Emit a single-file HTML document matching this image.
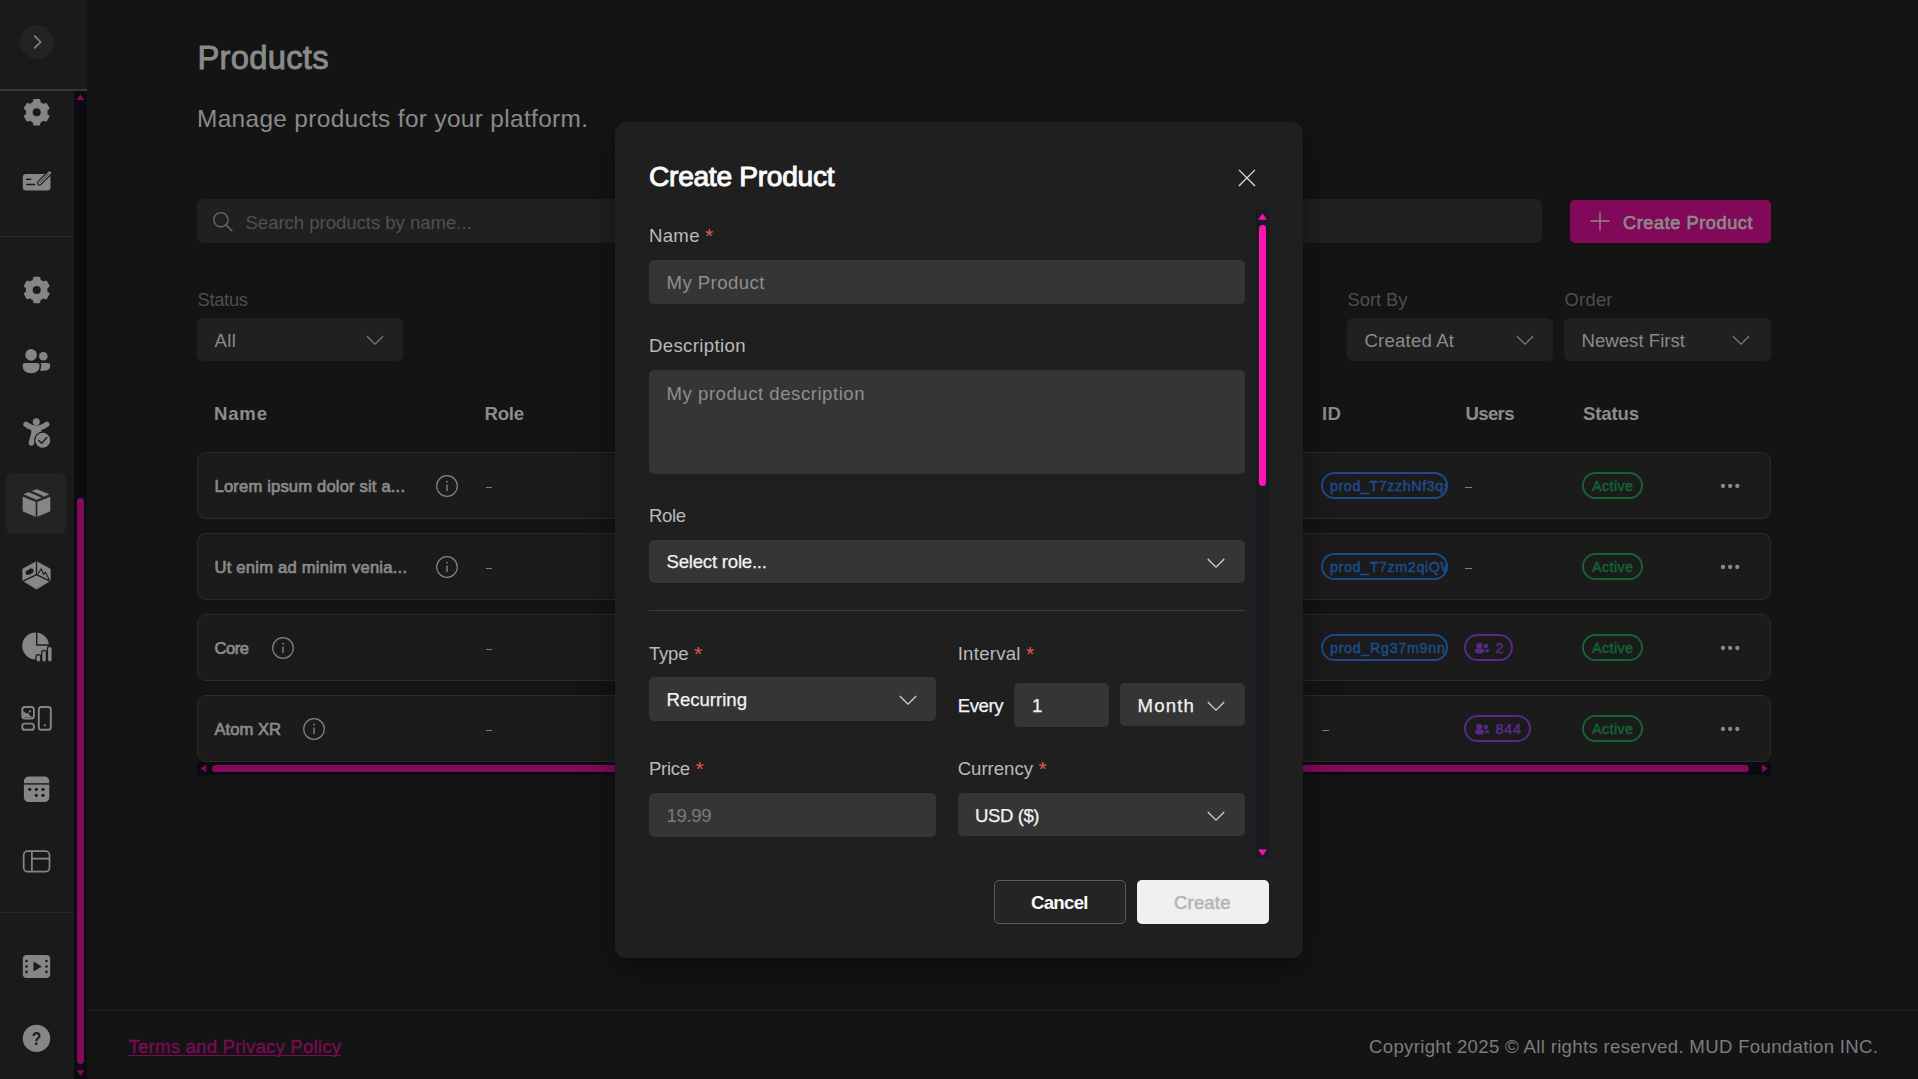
<!DOCTYPE html><html lang="en"><head><meta charset="utf-8"><title>Products</title><style>
html,body{margin:0;padding:0;background:#141414;}body{width:1918px;height:1079px;position:relative;overflow:hidden;font-family:"Liberation Sans", sans-serif;}
.a{position:absolute;display:block}.t{position:absolute;white-space:nowrap;line-height:1;}
</style></head><body>
<div class="a" style="left:0px;top:0px;width:87px;height:1079px;background:#1a1a1a;"></div>
<div class="a" style="left:0px;top:89px;width:87px;height:2px;background:#383838;"></div>
<div class="a" style="left:74px;top:91px;width:13px;height:988px;background:#0b0b10;"></div>
<div class="a" style="left:0px;top:236px;width:74px;height:1px;background:#272727;"></div>
<div class="a" style="left:0px;top:912px;width:74px;height:1px;background:#272727;"></div>
<svg class="a" style="left:74px;top:91px;" width="13" height="13" viewBox="0 0 13 13"><path d="M6.5 3.5 L10.5 9 L2.5 9 Z" fill="#830a5b"/></svg>
<svg class="a" style="left:74px;top:1066px;" width="13" height="13" viewBox="0 0 13 13"><path d="M6.5 9.8 L10.5 4.3 L2.5 4.3 Z" fill="#830a5b"/></svg>
<div class="a" style="left:77px;top:498px;width:7px;height:566px;background:#830a5b;border-radius:3.5px;"></div>
<div class="a" style="left:20px;top:25px;width:34px;height:34px;background:#232323;border-radius:17px;"></div>
<svg class="a" style="left:27px;top:32px;" width="20" height="20" viewBox="0 0 20 20"><path d="M7.2 3.6 L13.6 10 L7.2 16.4" fill="none" stroke="#868686" stroke-width="1.6"/></svg>
<div class="a" style="left:6px;top:473px;width:60px;height:61px;background:#232323;border-radius:7px;"></div>
<svg class="a" style="left:22px;top:98px;" width="30" height="30" viewBox="0 0 30 30"><path d="M11.65 4.78 L12.22 2.05 L17.18 2.05 L17.75 4.78 L21.42 6.90 L24.07 6.02 L26.55 10.33 L24.47 12.18 L24.47 16.42 L26.55 18.27 L24.07 22.58 L21.42 21.70 L17.75 23.82 L17.18 26.55 L12.22 26.55 L11.65 23.82 L7.98 21.70 L5.33 22.58 L2.85 18.27 L4.93 16.42 L4.93 12.18 L2.85 10.33 L5.33 6.02 L7.98 6.90Z" fill="#868686" stroke="#868686" stroke-width="2.0" stroke-linejoin="round"/><circle cx="14.7" cy="14.3" r="4.0" fill="#1a1a1a"/></svg>
<svg class="a" style="left:22px;top:275px;" width="30" height="30" viewBox="0 0 30 30"><path d="M11.65 5.38 L12.22 2.65 L17.18 2.65 L17.75 5.38 L21.42 7.50 L24.07 6.62 L26.55 10.93 L24.47 12.78 L24.47 17.02 L26.55 18.87 L24.07 23.18 L21.42 22.30 L17.75 24.42 L17.18 27.15 L12.22 27.15 L11.65 24.42 L7.98 22.30 L5.33 23.18 L2.85 18.87 L4.93 17.02 L4.93 12.78 L2.85 10.93 L5.33 6.62 L7.98 7.50Z" fill="#868686" stroke="#868686" stroke-width="2.0" stroke-linejoin="round"/><circle cx="14.7" cy="14.9" r="4.0" fill="#1a1a1a"/></svg>
<span class="t" style="left:197.4px;top:42.00px;font-size:32.8px;color:#8a8a8a;-webkit-text-stroke:0.9px #8a8a8a;letter-spacing:0.252px;">Products</span>
<span class="t" style="left:197px;top:107.00px;font-size:24.4px;color:#8a8a8a;letter-spacing:0.346px;">Manage products for your platform.</span>
<div class="a" style="left:197px;top:199px;width:1345px;height:43.5px;background:#202020;border-radius:6px;"></div>
<svg class="a" style="left:212px;top:211px;" width="22" height="22" viewBox="0 0 22 22"><circle cx="8.9" cy="8.7" r="7.1" fill="none" stroke="#686868" stroke-width="1.4"/><path d="M14 13.8 L19.8 19.8" stroke="#686868" stroke-width="1.5" stroke-linecap="round"/></svg>
<span class="t" style="left:245.5px;top:214.00px;font-size:18.6px;color:#505050;letter-spacing:-0.047px;">Search products by name...</span>
<div class="a" style="left:1570px;top:200px;width:201px;height:42.5px;background:#82085a;border-radius:5px;"></div>
<svg class="a" style="left:1589px;top:210px;" width="22" height="22" viewBox="0 0 22 22"><path d="M11 1.5 V20.5 M1.5 11 H20.5" stroke="#8a8a8a" stroke-width="1.3"/></svg>
<span class="t" style="left:1623px;top:214.00px;font-size:18.2px;color:#8a8a8a;-webkit-text-stroke:0.7px #8a8a8a;letter-spacing:0.552px;">Create Product</span>
<span class="t" style="left:197.5px;top:291.00px;font-size:18.4px;color:#4e4e4e;letter-spacing:-0.328px;">Status</span>
<span class="t" style="left:1347.5px;top:291.00px;font-size:18.4px;color:#4e4e4e;letter-spacing:-0.052px;">Sort By</span>
<span class="t" style="left:1564.5px;top:291.00px;font-size:18.4px;color:#4e4e4e;letter-spacing:0.246px;">Order</span>
<div class="a" style="left:197px;top:318px;width:205.5px;height:42.5px;background:#202020;border-radius:6px;"></div>
<span class="t" style="left:214.5px;top:332.00px;font-size:18.6px;color:#8a8a8a;letter-spacing:0.414px;">All</span>
<svg class="a" style="left:364.5px;top:330px;" width="20" height="20" viewBox="0 0 20 20"><path d="M2 6.2 L10 14.2 L18 6.2" fill="none" stroke="#7c7c7c" stroke-width="1.3"/></svg>
<div class="a" style="left:1347px;top:318px;width:205.5px;height:42.5px;background:#202020;border-radius:6px;"></div>
<span class="t" style="left:1364.5px;top:332.00px;font-size:18.6px;color:#8a8a8a;letter-spacing:0.182px;">Created At</span>
<svg class="a" style="left:1514.5px;top:330px;" width="20" height="20" viewBox="0 0 20 20"><path d="M2 6.2 L10 14.2 L18 6.2" fill="none" stroke="#7c7c7c" stroke-width="1.3"/></svg>
<div class="a" style="left:1564px;top:318px;width:206.5px;height:42.5px;background:#202020;border-radius:6px;"></div>
<span class="t" style="left:1581.5px;top:332.00px;font-size:18.6px;color:#8a8a8a;letter-spacing:0.017px;">Newest First</span>
<svg class="a" style="left:1731.1px;top:330px;" width="20" height="20" viewBox="0 0 20 20"><path d="M2 6.2 L10 14.2 L18 6.2" fill="none" stroke="#7c7c7c" stroke-width="1.3"/></svg>
<span class="t" style="left:214px;top:405.00px;font-size:18.6px;color:#8c8c8c;font-weight:700;letter-spacing:0.781px;">Name</span>
<span class="t" style="left:484.5px;top:405.00px;font-size:18.6px;color:#8c8c8c;font-weight:700;letter-spacing:-0.266px;">Role</span>
<span class="t" style="left:1322px;top:405.00px;font-size:18.6px;color:#8c8c8c;font-weight:700;letter-spacing:0.406px;">ID</span>
<span class="t" style="left:1465.5px;top:405.00px;font-size:18.6px;color:#8c8c8c;font-weight:700;letter-spacing:-0.672px;">Users</span>
<span class="t" style="left:1583px;top:405.00px;font-size:18.6px;color:#8c8c8c;font-weight:700;letter-spacing:-0.166px;">Status</span>
<div class="a" style="left:197px;top:452px;width:1573.5px;height:66.5px;background:#1b1b1b;border-radius:9px;box-sizing:border-box;border:1px solid #2b2b2b;"></div>
<span class="t" style="left:214.5px;top:479.00px;font-size:16.6px;color:#8a8a8a;-webkit-text-stroke:0.7px #8a8a8a;letter-spacing:0.168px;">Lorem ipsum dolor sit a...</span>
<svg class="a" style="left:434.6px;top:473.5px;" width="24" height="24" viewBox="0 0 24 24"><circle cx="12" cy="12" r="10.3" fill="none" stroke="#828282" stroke-width="1.2"/><path d="M12 10.6 V17" stroke="#8a8a8a" stroke-width="1.3"/><circle cx="12" cy="7.6" r="0.9" fill="#8a8a8a"/></svg>
<div class="a" style="left:485.5px;top:486.5px;width:6.5px;height:1.1999999999999886px;background:#7c7c7c;"></div>
<div class="a" style="left:1321px;top:472.0px;width:126.5px;height:26.5px;box-sizing:border-box;border:2px solid #1b4c8a;border-radius:14px;overflow:hidden;"></div>
<span class="t" style="left:1330px;top:479.00px;font-size:14.3px;color:#1b4c8a;-webkit-text-stroke:0.5px #1b4c8a;letter-spacing:0.581px;clip-path:inset(-5px 5.5px -5px 0);">prod_T7zzhNf3qs</span>
<div class="a" style="left:1465px;top:486.5px;width:6.5px;height:1.1999999999999886px;background:#7c7c7c;"></div>
<div class="a" style="left:1581.75px;top:472.0px;width:60.75px;height:26.5px;background:transparent;border-radius:14px;box-sizing:border-box;border:2px solid #166233;"></div>
<span class="t" style="left:1592px;top:479.00px;font-size:14.3px;color:#166233;-webkit-text-stroke:0.5px #166233;letter-spacing:0.412px;">Active</span>
<svg class="a" style="left:1715px;top:479.5px;" width="30" height="12" viewBox="0 0 30 12"><circle cx="8.0" cy="6" r="2.15" fill="#8a8a8a"/><circle cx="15.15" cy="6" r="2.15" fill="#8a8a8a"/><circle cx="22.3" cy="6" r="2.15" fill="#8a8a8a"/></svg>
<div class="a" style="left:197px;top:533px;width:1573.5px;height:66.5px;background:#1b1b1b;border-radius:9px;box-sizing:border-box;border:1px solid #2b2b2b;"></div>
<span class="t" style="left:214.5px;top:560.00px;font-size:16.6px;color:#8a8a8a;-webkit-text-stroke:0.7px #8a8a8a;letter-spacing:0.220px;">Ut enim ad minim venia...</span>
<svg class="a" style="left:434.6px;top:554.5px;" width="24" height="24" viewBox="0 0 24 24"><circle cx="12" cy="12" r="10.3" fill="none" stroke="#828282" stroke-width="1.2"/><path d="M12 10.6 V17" stroke="#8a8a8a" stroke-width="1.3"/><circle cx="12" cy="7.6" r="0.9" fill="#8a8a8a"/></svg>
<div class="a" style="left:485.5px;top:567.5px;width:6.5px;height:1.2000000000000455px;background:#7c7c7c;"></div>
<div class="a" style="left:1321px;top:553.0px;width:126.5px;height:26.5px;box-sizing:border-box;border:2px solid #1b4c8a;border-radius:14px;overflow:hidden;"></div>
<span class="t" style="left:1330px;top:560.00px;font-size:14.3px;color:#1b4c8a;-webkit-text-stroke:0.5px #1b4c8a;letter-spacing:0.614px;clip-path:inset(-5px 8.5px -5px 0);">prod_T7zm2qiQW</span>
<div class="a" style="left:1465px;top:567.5px;width:6.5px;height:1.2000000000000455px;background:#7c7c7c;"></div>
<div class="a" style="left:1581.75px;top:553.0px;width:60.75px;height:26.5px;background:transparent;border-radius:14px;box-sizing:border-box;border:2px solid #166233;"></div>
<span class="t" style="left:1592px;top:560.00px;font-size:14.3px;color:#166233;-webkit-text-stroke:0.5px #166233;letter-spacing:0.412px;">Active</span>
<svg class="a" style="left:1715px;top:560.5px;" width="30" height="12" viewBox="0 0 30 12"><circle cx="8.0" cy="6" r="2.15" fill="#8a8a8a"/><circle cx="15.15" cy="6" r="2.15" fill="#8a8a8a"/><circle cx="22.3" cy="6" r="2.15" fill="#8a8a8a"/></svg>
<div class="a" style="left:197px;top:614px;width:1573.5px;height:66.5px;background:#1b1b1b;border-radius:9px;box-sizing:border-box;border:1px solid #2b2b2b;"></div>
<span class="t" style="left:214.5px;top:641.00px;font-size:16.6px;color:#8a8a8a;-webkit-text-stroke:0.7px #8a8a8a;letter-spacing:-0.490px;">Core</span>
<svg class="a" style="left:270.8px;top:635.5px;" width="24" height="24" viewBox="0 0 24 24"><circle cx="12" cy="12" r="10.3" fill="none" stroke="#828282" stroke-width="1.2"/><path d="M12 10.6 V17" stroke="#8a8a8a" stroke-width="1.3"/><circle cx="12" cy="7.6" r="0.9" fill="#8a8a8a"/></svg>
<div class="a" style="left:485.5px;top:648.5px;width:6.5px;height:1.2000000000000455px;background:#7c7c7c;"></div>
<div class="a" style="left:1321px;top:634.0px;width:126.5px;height:26.5px;box-sizing:border-box;border:2px solid #1b4c8a;border-radius:14px;overflow:hidden;"></div>
<span class="t" style="left:1330px;top:641.00px;font-size:14.3px;color:#1b4c8a;-webkit-text-stroke:0.5px #1b4c8a;letter-spacing:0.694px;clip-path:inset(-5px 4.0px -5px 0);">prod_Rg37m9nnI</span>
<div class="a" style="left:1463.75px;top:634.0px;width:48.75px;height:26.5px;background:transparent;border-radius:14px;box-sizing:border-box;border:2px solid #572a88;"></div>
<svg class="a" style="left:1474px;top:639.5px;" width="16" height="16" viewBox="0 0 16 16"><circle cx="5.35" cy="5.7" r="3" fill="#572a88"/><circle cx="11.9" cy="6" r="2.2" fill="#572a88"/><path d="M0.8 10.4 Q0.8 8.7 2.5 8.7 H8.6 Q10.3 8.7 10.3 10.4 Q10.3 13.5 5.55 13.5 Q0.8 13.5 0.8 10.4Z" fill="#572a88"/><path d="M11 9.3 H13.6 Q15.2 9.3 15.2 10.7 Q15.2 12.4 12 12.4 Q11.5 12.4 11.1 12.3 Q11.5 11.5 11.5 10.6 Q11.5 9.9 11 9.3Z" fill="#572a88"/></svg>
<span class="t" style="left:1495.5px;top:641.00px;font-size:14.3px;color:#572a88;-webkit-text-stroke:0.5px #572a88;letter-spacing:-0.453px;">2</span>
<div class="a" style="left:1581.75px;top:634.0px;width:60.75px;height:26.5px;background:transparent;border-radius:14px;box-sizing:border-box;border:2px solid #166233;"></div>
<span class="t" style="left:1592px;top:641.00px;font-size:14.3px;color:#166233;-webkit-text-stroke:0.5px #166233;letter-spacing:0.412px;">Active</span>
<svg class="a" style="left:1715px;top:641.5px;" width="30" height="12" viewBox="0 0 30 12"><circle cx="8.0" cy="6" r="2.15" fill="#8a8a8a"/><circle cx="15.15" cy="6" r="2.15" fill="#8a8a8a"/><circle cx="22.3" cy="6" r="2.15" fill="#8a8a8a"/></svg>
<div class="a" style="left:197px;top:695px;width:1573.5px;height:66.5px;background:#1b1b1b;border-radius:9px;box-sizing:border-box;border:1px solid #2b2b2b;"></div>
<span class="t" style="left:214.5px;top:722.00px;font-size:16.6px;color:#8a8a8a;-webkit-text-stroke:0.7px #8a8a8a;letter-spacing:0.016px;">Atom XR</span>
<svg class="a" style="left:301.8px;top:716.5px;" width="24" height="24" viewBox="0 0 24 24"><circle cx="12" cy="12" r="10.3" fill="none" stroke="#828282" stroke-width="1.2"/><path d="M12 10.6 V17" stroke="#8a8a8a" stroke-width="1.3"/><circle cx="12" cy="7.6" r="0.9" fill="#8a8a8a"/></svg>
<div class="a" style="left:485.5px;top:729.5px;width:6.5px;height:1.2000000000000455px;background:#7c7c7c;"></div>
<div class="a" style="left:1322px;top:729.5px;width:6.5px;height:1.2000000000000455px;background:#7c7c7c;"></div>
<div class="a" style="left:1463.75px;top:715.0px;width:66.75px;height:26.5px;background:transparent;border-radius:14px;box-sizing:border-box;border:2px solid #572a88;"></div>
<svg class="a" style="left:1474px;top:720.5px;" width="16" height="16" viewBox="0 0 16 16"><circle cx="5.35" cy="5.7" r="3" fill="#572a88"/><circle cx="11.9" cy="6" r="2.2" fill="#572a88"/><path d="M0.8 10.4 Q0.8 8.7 2.5 8.7 H8.6 Q10.3 8.7 10.3 10.4 Q10.3 13.5 5.55 13.5 Q0.8 13.5 0.8 10.4Z" fill="#572a88"/><path d="M11 9.3 H13.6 Q15.2 9.3 15.2 10.7 Q15.2 12.4 12 12.4 Q11.5 12.4 11.1 12.3 Q11.5 11.5 11.5 10.6 Q11.5 9.9 11 9.3Z" fill="#572a88"/></svg>
<span class="t" style="left:1495.5px;top:722.00px;font-size:14.3px;color:#572a88;-webkit-text-stroke:0.5px #572a88;letter-spacing:0.820px;">844</span>
<div class="a" style="left:1581.75px;top:715.0px;width:60.75px;height:26.5px;background:transparent;border-radius:14px;box-sizing:border-box;border:2px solid #166233;"></div>
<span class="t" style="left:1592px;top:722.00px;font-size:14.3px;color:#166233;-webkit-text-stroke:0.5px #166233;letter-spacing:0.412px;">Active</span>
<svg class="a" style="left:1715px;top:722.5px;" width="30" height="12" viewBox="0 0 30 12"><circle cx="8.0" cy="6" r="2.15" fill="#8a8a8a"/><circle cx="15.15" cy="6" r="2.15" fill="#8a8a8a"/><circle cx="22.3" cy="6" r="2.15" fill="#8a8a8a"/></svg>
<div class="a" style="left:197px;top:762px;width:1573.5px;height:13px;background:#0b0b10;"></div>
<div class="a" style="left:212px;top:764.5px;width:1537px;height:7.5px;background:#830a5b;border-radius:3.75px;"></div>
<svg class="a" style="left:197px;top:762px;" width="13" height="13" viewBox="0 0 13 13"><path d="M3.4 6.5 L9.2 2.5 L9.2 10.5Z" fill="#830a5b"/></svg>
<svg class="a" style="left:1757.5px;top:762px;" width="13" height="13" viewBox="0 0 13 13"><path d="M9.8 6.5 L4 2.5 L4 10.5Z" fill="#830a5b"/></svg>
<div class="a" style="left:87px;top:1010px;width:1831px;height:1px;background:#232323;"></div>
<span class="t" style="left:128.5px;top:1038.00px;font-size:18.6px;color:#7c0a57;-webkit-text-stroke:0.35px #7c0a57;letter-spacing:0.209px;text-decoration:underline;text-decoration-thickness:1.3px;text-underline-offset:1.5px;">Terms and Privacy Policy</span>
<span class="t" style="left:1369px;top:1038.00px;font-size:18.6px;color:#7c7c7c;letter-spacing:0.319px;">Copyright 2025 © All rights reserved. MUD Foundation INC.</span>
<svg class="a" style="left:0px;top:0px;" width="74" height="1079" viewBox="0 0 74 1079"><rect x="22.8" y="174" width="27.7" height="16.5" rx="3.2" fill="#868686"/><path d="M26.6 179.2 H30.6 M26.6 184.4 H34.6" stroke="#1a1a1a" stroke-width="1.5" stroke-linecap="round"/><path d="M39.6 182.9 L49.6 172.9" stroke="#1a1a1a" stroke-width="5.2" stroke-linecap="round"/><path d="M39.6 182.9 L49.6 172.9" stroke="#868686" stroke-width="3.0" stroke-linecap="round"/><path d="M40.2 182.3 L48.6 173.9" stroke="#1a1a1a" stroke-width="0.8" stroke-linecap="round"/><circle cx="31.1" cy="354.9" r="5.8" fill="#868686"/><circle cx="43.3" cy="356.2" r="4.3" fill="#868686"/><path d="M25.2 363 H37 Q39.6 363 39.6 365.6 Q39.6 373.2 31.1 373.2 Q22.6 373.2 22.6 365.6 Q22.6 363 25.2 363Z" fill="#868686"/><path d="M40.6 363 H47.8 Q50.3 363 50.3 365.4 Q50.3 370.7 43.4 370.7 Q41.4 370.7 39.9 370.2 Q41.3 368.2 41.3 365.6 Q41.3 364 40.6 363Z" fill="#868686"/><circle cx="36.3" cy="421.8" r="3.5" fill="#868686"/><path d="M26 424.3 Q31.4 428.2 36.3 428.2 Q41.2 428.2 46.8 424.3" fill="none" stroke="#868686" stroke-width="5.3" stroke-linecap="round"/><path d="M31.2 427 H41.4 V436 L38 436 L33.6 444.6 Q32.4 446.4 30.2 445.6 Q28 444.8 28.6 442.6 L31.2 433Z" fill="#868686"/><circle cx="42.7" cy="440.3" r="8.7" fill="#1a1a1a"/><circle cx="42.7" cy="440.3" r="7.5" fill="#868686"/><path d="M38.8 440.6 L41.6 443.3 L46.8 437.6" fill="none" stroke="#1a1a1a" stroke-width="1.4" stroke-linecap="round" stroke-linejoin="round"/><path d="M24 494.3 L36.5 489.4 L49 494.3 L36.5 499.6Z" fill="#868686" stroke="#868686" stroke-width="0.5" stroke-linejoin="round"/><path d="M29.2 491.2 L43 497" stroke="#232323" stroke-width="2.1"/><path d="M22.9 496.9 L35.5 502.1 V516.6 L22.9 511.2Z" fill="#868686" stroke="#868686" stroke-width="0.4" stroke-linejoin="round"/><path d="M50.1 496.9 L37.5 502.1 V516.6 L50.1 511.2Z" fill="#868686" stroke="#868686" stroke-width="0.4" stroke-linejoin="round"/><path d="M36.5 561.6 L50.2 569 V580.8 L36.5 589 L22.8 580.8 V569Z" fill="#868686" stroke="#868686" stroke-width="0.8" stroke-linejoin="round"/><path d="M36.5 561.4 V574.6 M36.5 574.6 L22.6 581.4 M36.5 574.6 L50.4 581.4" stroke="#1a1a1a" stroke-width="1.3" fill="none"/><path d="M27.2 575 Q25 574.2 25.8 571.6 Q26.6 570 28.2 570.2 Q29 568 31.8 568.6 Q34.2 569.4 33.4 571.8 Q32.8 573.6 30.6 574.2Z" fill="#1a1a1a"/><path d="M38 573.8 L41.2 569 L43.6 574.4 L45.4 572.2 L49.6 580.4" fill="none" stroke="#1a1a1a" stroke-width="1.1" stroke-linejoin="miter"/><circle cx="35.6" cy="646" r="13.4" fill="#868686"/><path d="M36.7 632 V645 H50" stroke="#1a1a1a" stroke-width="1.4" fill="none"/><rect x="35.300000000000004" y="653.9000000000001" width="6.1" height="7.8" rx="3" fill="#1a1a1a"/><rect x="41.0" y="649.7" width="6.1" height="12.0" rx="3" fill="#1a1a1a"/><rect x="46.800000000000004" y="645.6" width="6.1" height="16.1" rx="3" fill="#1a1a1a"/><rect x="34" y="661.6" width="20" height="3" fill="#1a1a1a"/><rect x="36.6" y="655.2" width="3.5" height="6.4" rx="1.75" fill="#868686"/><rect x="42.3" y="651" width="3.5" height="10.6" rx="1.75" fill="#868686"/><rect x="48.1" y="646.9" width="3.5" height="14.7" rx="1.75" fill="#868686"/><rect x="22.3" y="707" width="11.6" height="11.6" rx="2.6" fill="none" stroke="#868686" stroke-width="1.9"/><path d="M23.4 716.8 L27.4 712.6 L30.6 716 L32.8 717.6 H23.4Z" fill="#868686"/><path d="M23.2 717.4 V711 L27.2 714.6Z" fill="#868686"/><circle cx="30" cy="711.4" r="1.1" fill="#868686"/><rect x="22.3" y="723.6" width="11.6" height="6.2" rx="2.4" fill="none" stroke="#868686" stroke-width="1.9"/><rect x="38.8" y="707" width="12" height="22.8" rx="2.6" fill="none" stroke="#868686" stroke-width="1.9"/><circle cx="44.8" cy="725.3" r="1.1" fill="#868686"/><rect x="23.9" y="776.6" width="25.4" height="25.4" rx="4.6" fill="#868686"/><path d="M23.5 783.9 H49.7" stroke="#1a1a1a" stroke-width="1.4"/><circle cx="29.7" cy="789.3" r="1.6" fill="#1a1a1a"/><circle cx="36.3" cy="789.3" r="1.6" fill="#1a1a1a"/><circle cx="43" cy="789.3" r="1.6" fill="#1a1a1a"/><circle cx="36.3" cy="795.3" r="1.6" fill="#1a1a1a"/><circle cx="43" cy="795.3" r="1.6" fill="#1a1a1a"/><rect x="23.7" y="851.1" width="25.8" height="20.6" rx="4" fill="none" stroke="#868686" stroke-width="1.7"/><path d="M31.9 851 V871.8 M31.9 858.6 H49.6" stroke="#868686" stroke-width="1.7"/><rect x="22.8" y="955" width="27.4" height="23" rx="4" fill="#868686"/><path d="M33.8 962 V971 L41.2 966.5Z" fill="#1a1a1a" stroke="#1a1a1a" stroke-width="0.6" stroke-linejoin="round"/><circle cx="26.5" cy="961" r="1.3" fill="#1a1a1a"/><circle cx="26.5" cy="966.5" r="1.3" fill="#1a1a1a"/><circle cx="26.5" cy="971.9" r="1.3" fill="#1a1a1a"/><circle cx="46.5" cy="961" r="1.3" fill="#1a1a1a"/><circle cx="46.5" cy="966.5" r="1.3" fill="#1a1a1a"/><circle cx="46.5" cy="971.9" r="1.3" fill="#1a1a1a"/><circle cx="36.5" cy="1038.4" r="13.7" fill="#868686"/><text x="36.5" y="1045.4" transform="translate(36.5 0) scale(0.84 1) translate(-36.5 0)" text-anchor="middle" font-family="Liberation Sans, sans-serif" font-weight="700" font-size="18.5" fill="#1a1a1a">?</text></svg>
<div class="a" style="left:615px;top:122px;width:688px;height:836px;background:#1f1f1f;border-radius:11px;box-shadow:0 10px 32px rgba(0,0,0,0.42);"></div>
<span class="t" style="left:649px;top:162.00px;font-size:28.2px;color:#fafafa;-webkit-text-stroke:1.0px #fafafa;letter-spacing:-0.306px;">Create Product</span>
<svg class="a" style="left:1236px;top:167px;" width="22" height="22" viewBox="0 0 22 22"><path d="M2.9 2.9 L19 19 M19 2.9 L2.9 19" stroke="#e0e0e0" stroke-width="1.3"/></svg>
<div class="a" style="left:1256px;top:210px;width:13px;height:648px;background:#191920;"></div>
<div class="a" style="left:1259px;top:224.5px;width:7px;height:261.0px;background:#ff14b1;border-radius:3.5px;"></div>
<svg class="a" style="left:1256px;top:211px;" width="13" height="13" viewBox="0 0 13 13"><path d="M6.5 2.9 L10.4 8.4 L2.6 8.4Z" fill="#ff14b1" stroke="#ff14b1" stroke-width="0.6" stroke-linejoin="round"/></svg>
<svg class="a" style="left:1256px;top:845px;" width="13" height="13" viewBox="0 0 13 13"><path d="M6.5 10.3 L10.4 4.8 L2.6 4.8Z" fill="#ff14b1" stroke="#ff14b1" stroke-width="0.6" stroke-linejoin="round"/></svg>
<span class="t" style="left:649px;top:227.00px;font-size:18.6px;color:#bababa;letter-spacing:0.297px;">Name</span>
<span class="t" style="left:705.0px;top:225.00px;font-size:21px;color:#e25555;">*</span>
<div class="a" style="left:649px;top:260px;width:596px;height:44px;background:#353535;border-radius:5px;"></div>
<span class="t" style="left:666.5px;top:274.00px;font-size:18.6px;color:#8e8e8e;letter-spacing:0.441px;">My Product</span>
<span class="t" style="left:649px;top:337.00px;font-size:18.6px;color:#bababa;letter-spacing:0.348px;">Description</span>
<div class="a" style="left:649px;top:370px;width:596px;height:103.5px;background:#353535;border-radius:5px;"></div>
<span class="t" style="left:666.5px;top:385.00px;font-size:18.6px;color:#8e8e8e;letter-spacing:0.521px;">My product description</span>
<span class="t" style="left:649px;top:507.00px;font-size:18.6px;color:#bababa;letter-spacing:-0.417px;">Role</span>
<div class="a" style="left:649px;top:540px;width:596px;height:42.700000000000045px;background:#353535;border-radius:5px;"></div>
<span class="t" style="left:666.5px;top:553.00px;font-size:18.6px;color:#f2f2f2;-webkit-text-stroke:0.25px #f2f2f2;letter-spacing:-0.220px;">Select role...</span>
<svg class="a" style="left:1205.5px;top:552.5px;" width="20" height="20" viewBox="0 0 20 20"><path d="M1.8 6 L10 14.2 L18.2 6" fill="none" stroke="#d4d4d4" stroke-width="1.25"/></svg>
<div class="a" style="left:649px;top:610px;width:596px;height:1px;background:#3d3d3d;"></div>
<span class="t" style="left:649px;top:645.00px;font-size:18.6px;color:#bababa;letter-spacing:-0.271px;">Type</span>
<span class="t" style="left:694.0px;top:643.00px;font-size:21px;color:#e25555;">*</span>
<div class="a" style="left:649px;top:677px;width:287px;height:43.799999999999955px;background:#353535;border-radius:5px;"></div>
<span class="t" style="left:666.5px;top:691.00px;font-size:18.6px;color:#f2f2f2;-webkit-text-stroke:0.25px #f2f2f2;letter-spacing:-0.014px;">Recurring</span>
<svg class="a" style="left:897.5px;top:690px;" width="20" height="20" viewBox="0 0 20 20"><path d="M1.8 6 L10 14.2 L18.2 6" fill="none" stroke="#d4d4d4" stroke-width="1.25"/></svg>
<span class="t" style="left:957.7px;top:645.00px;font-size:18.6px;color:#bababa;letter-spacing:0.259px;">Interval</span>
<span class="t" style="left:1026.0px;top:643.00px;font-size:21px;color:#e25555;">*</span>
<span class="t" style="left:957.7px;top:697.00px;font-size:18.6px;color:#f2f2f2;-webkit-text-stroke:0.25px #f2f2f2;letter-spacing:-0.433px;">Every</span>
<div class="a" style="left:1013.6px;top:683px;width:95.39999999999998px;height:43.5px;background:#353535;border-radius:5px;"></div>
<span class="t" style="left:1032px;top:697.00px;font-size:18.6px;color:#f2f2f2;-webkit-text-stroke:0.25px #f2f2f2;">1</span>
<div class="a" style="left:1120px;top:683px;width:125px;height:42.700000000000045px;background:#353535;border-radius:5px;"></div>
<span class="t" style="left:1137.5px;top:697.00px;font-size:18.6px;color:#f2f2f2;-webkit-text-stroke:0.25px #f2f2f2;letter-spacing:1.153px;">Month</span>
<svg class="a" style="left:1205.5px;top:695.5px;" width="20" height="20" viewBox="0 0 20 20"><path d="M1.8 6 L10 14.2 L18.2 6" fill="none" stroke="#d4d4d4" stroke-width="1.25"/></svg>
<span class="t" style="left:649px;top:760.00px;font-size:18.6px;color:#bababa;letter-spacing:-0.344px;">Price</span>
<span class="t" style="left:695.5px;top:758.00px;font-size:21px;color:#e25555;">*</span>
<div class="a" style="left:649px;top:793px;width:287px;height:43.799999999999955px;background:#353535;border-radius:5px;"></div>
<span class="t" style="left:666.5px;top:807.00px;font-size:18.6px;color:#7a7a7a;letter-spacing:-0.383px;">19.99</span>
<span class="t" style="left:957.7px;top:760.00px;font-size:18.6px;color:#bababa;letter-spacing:-0.020px;">Currency</span>
<span class="t" style="left:1038.5px;top:758.00px;font-size:21px;color:#e25555;">*</span>
<div class="a" style="left:957.7px;top:793px;width:287.29999999999995px;height:42.700000000000045px;background:#353535;border-radius:5px;"></div>
<span class="t" style="left:975px;top:807.00px;font-size:18.6px;color:#f2f2f2;-webkit-text-stroke:0.25px #f2f2f2;letter-spacing:-0.443px;">USD ($)</span>
<svg class="a" style="left:1205.5px;top:806px;" width="20" height="20" viewBox="0 0 20 20"><path d="M1.8 6 L10 14.2 L18.2 6" fill="none" stroke="#d4d4d4" stroke-width="1.25"/></svg>
<div class="a" style="left:994px;top:880px;width:131.5px;height:44px;background:#242424;border-radius:5px;box-sizing:border-box;border:1px solid #5c5c5c;"></div>
<span class="t" style="left:1031px;top:894.00px;font-size:18.6px;color:#fafafa;font-weight:700;letter-spacing:-0.697px;">Cancel</span>
<div class="a" style="left:1137px;top:880px;width:132px;height:44px;background:#f0f0f0;border-radius:5px;"></div>
<span class="t" style="left:1174px;top:894.00px;font-size:18.6px;color:#b4b4b4;-webkit-text-stroke:0.5px #b4b4b4;letter-spacing:0.138px;">Create</span>
</body></html>
